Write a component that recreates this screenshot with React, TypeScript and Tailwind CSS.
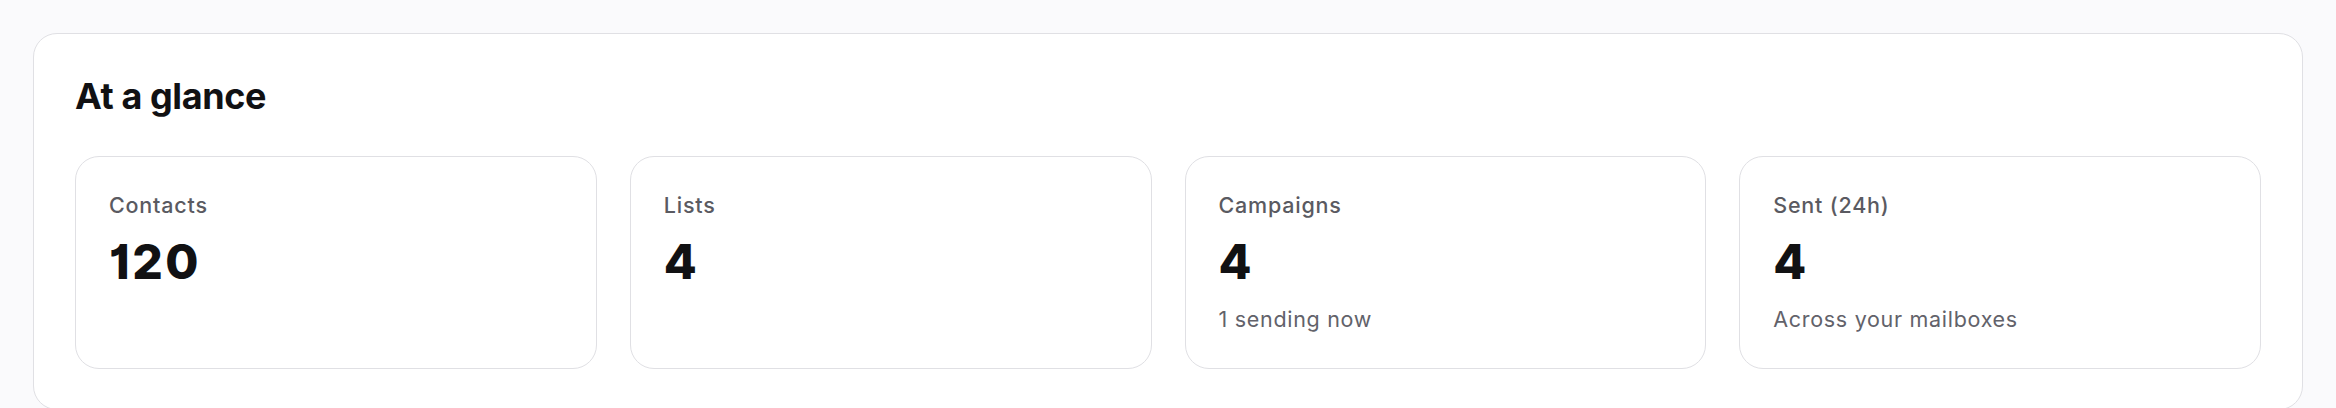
import React from "react";

type Stat = { label: string; value: string; sub?: string };

const stats: Stat[] = [
  { label: "Contacts", value: "120" },
  { label: "Lists", value: "4" },
  { label: "Campaigns", value: "4", sub: "1 sending now" },
  { label: "Sent (24h)", value: "4", sub: "Across your mailboxes" },
];

function StatCard({ stat }: { stat: Stat }) {
  return (
    <div className="flex flex-col gap-[18px] rounded-[24px] border border-[#e0e0e4] bg-white px-[33px] pt-[33px] pb-[34px]">
      <div className="text-[21.5px] leading-[30px] font-medium tracking-[0.8px] text-[#5a5a61]">{stat.label}</div>
      <div className="text-[48px] leading-[48px] font-extrabold tracking-[2.5px] text-[#111113] [font-feature-settings:'cv01']">
        {stat.value}
      </div>
      {stat.sub ? (
        <div className="text-[21.5px] leading-[30px] font-normal tracking-[0.7px] text-[#62626a]">{stat.sub}</div>
      ) : null}
    </div>
  );
}

export default function App() {
  return (
    <div
      className="min-h-[408px] bg-[#fafafc] px-[33px] pt-[33px]"
      style={{ fontFamily: "Inter, 'Noto Sans', sans-serif" }}
    >
      <section className="rounded-[24px] border border-[#e0e0e4] bg-white px-[41px] pt-[40px] pb-[40px]">
        <h2 className="text-[36px] leading-[45px] font-bold tracking-[-0.4px] text-[#111113]">At a glance</h2>
        <div className="mt-[37px] grid grid-cols-4 gap-[33px]">
          {stats.map((s) => (
            <StatCard key={s.label} stat={s} />
          ))}
        </div>
      </section>
    </div>
  );
}
